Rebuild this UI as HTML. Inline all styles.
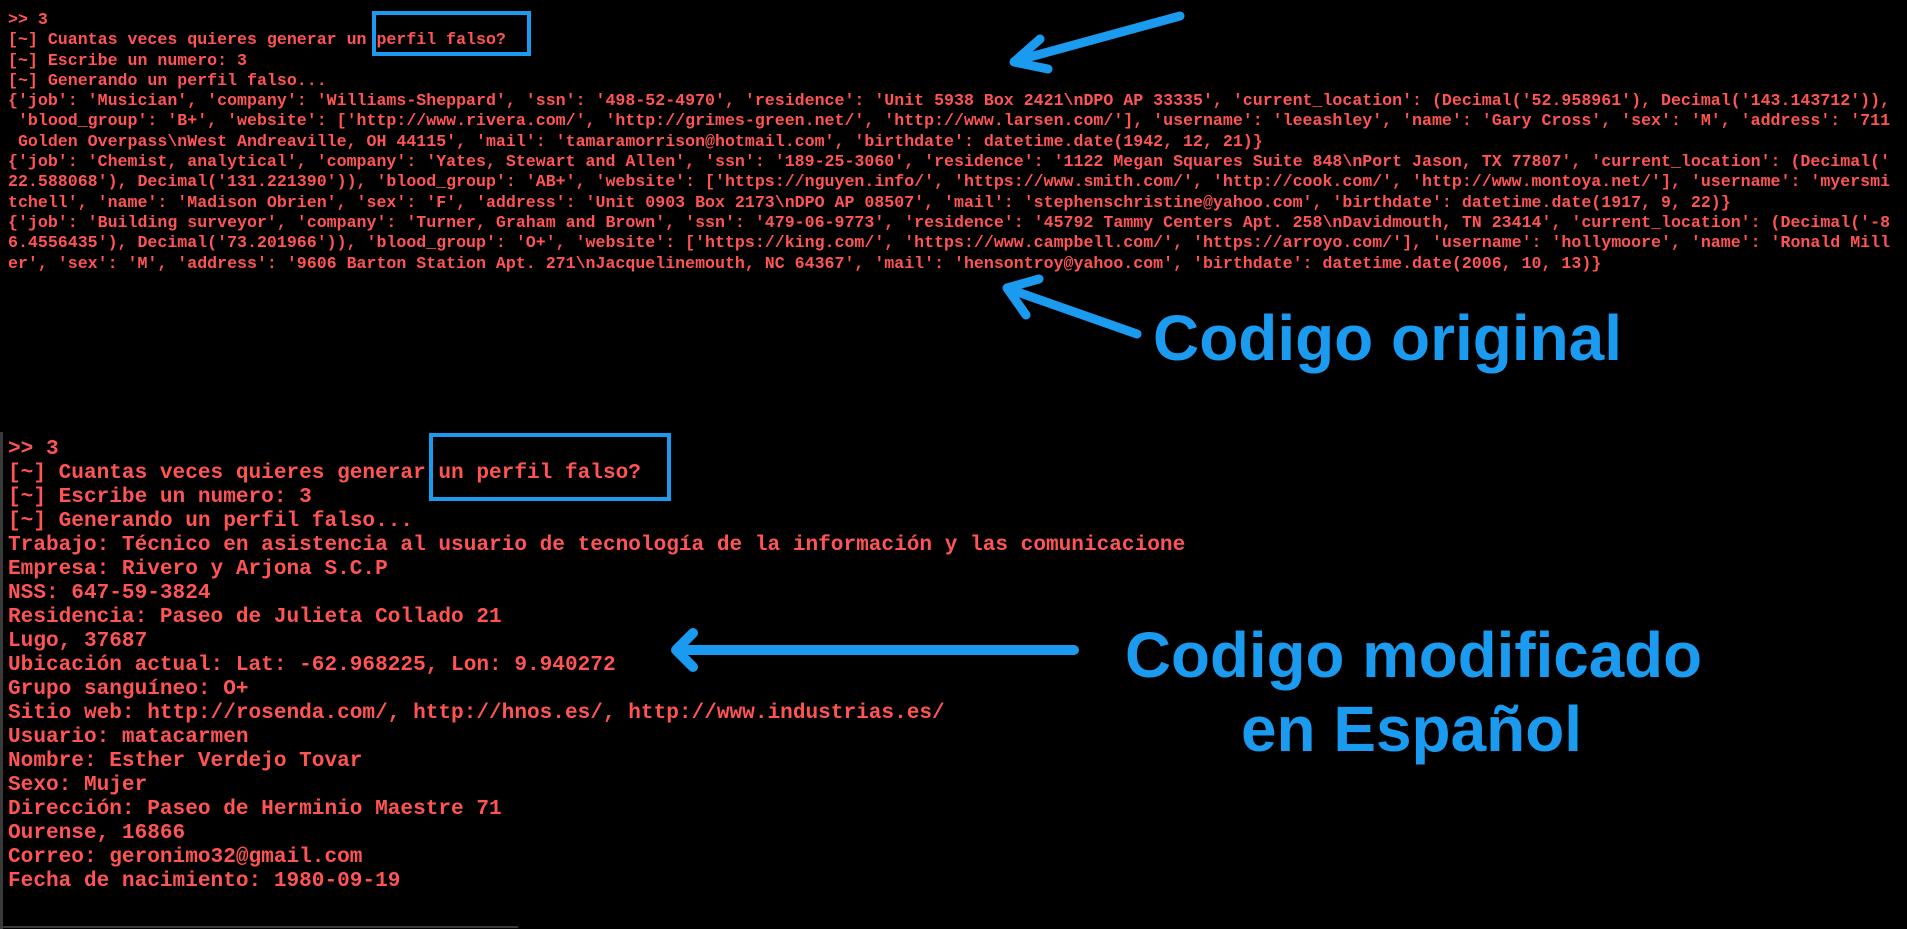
<!DOCTYPE html>
<html><head><meta charset="utf-8"><style>
html,body{margin:0;padding:0;background:#000;width:1907px;height:929px;overflow:hidden;position:relative}
.t{position:absolute;white-space:pre;color:#ff5454;font-family:"Liberation Mono",monospace}
#top{left:8px;top:10px;font-size:16.6px;line-height:20.3px;font-weight:bold}
#bot{left:8px;top:437px;font-size:21.1px;line-height:24px;font-weight:bold;width:1178px;overflow:hidden}
.box{position:absolute;border:4px solid #1a9bf0;box-sizing:border-box}
</style></head><body>
<div class="t" id="top">&gt;&gt; 3
[~] Cuantas veces quieres generar un perfil falso?
[~] Escribe un numero: 3
[~] Generando un perfil falso...
{'job': 'Musician', 'company': 'Williams-Sheppard', 'ssn': '498-52-4970', 'residence': 'Unit 5938 Box 2421\nDPO AP 33335', 'current_location': (Decimal('52.958961'), Decimal('143.143712')),
 'blood_group': 'B+', 'website': ['http://www.rivera.com/', 'http://grimes-green.net/', 'http://www.larsen.com/'], 'username': 'leeashley', 'name': 'Gary Cross', 'sex': 'M', 'address': '711
 Golden Overpass\nWest Andreaville, OH 44115', 'mail': 'tamaramorrison@hotmail.com', 'birthdate': datetime.date(1942, 12, 21)}
{'job': 'Chemist, analytical', 'company': 'Yates, Stewart and Allen', 'ssn': '189-25-3060', 'residence': '1122 Megan Squares Suite 848\nPort Jason, TX 77807', 'current_location': (Decimal('
22.588068'), Decimal('131.221390')), 'blood_group': 'AB+', 'website': ['https://nguyen.info/', 'https://www.smith.com/', 'http://cook.com/', 'http://www.montoya.net/'], 'username': 'myersmi
tchell', 'name': 'Madison Obrien', 'sex': 'F', 'address': 'Unit 0903 Box 2173\nDPO AP 08507', 'mail': 'stephenschristine@yahoo.com', 'birthdate': datetime.date(1917, 9, 22)}
{'job': 'Building surveyor', 'company': 'Turner, Graham and Brown', 'ssn': '479-06-9773', 'residence': '45792 Tammy Centers Apt. 258\nDavidmouth, TN 23414', 'current_location': (Decimal('-8
6.4556435'), Decimal('73.201966')), 'blood_group': 'O+', 'website': ['https://king.com/', 'https://www.campbell.com/', 'https://arroyo.com/'], 'username': 'hollymoore', 'name': 'Ronald Mill
er', 'sex': 'M', 'address': '9606 Barton Station Apt. 271\nJacquelinemouth, NC 64367', 'mail': 'hensontroy@yahoo.com', 'birthdate': datetime.date(2006, 10, 13)}</div>
<div class="box" style="left:372px;top:11px;width:159px;height:45px"></div>

<div style="position:absolute;left:0;top:432px;width:3px;height:497px;background:#3a3a3a"></div>
<div style="position:absolute;left:0;top:926px;width:518px;height:2px;background:#3a3a3a"></div>
<div class="t" id="bot">&gt;&gt; 3
[~] Cuantas veces quieres generar un perfil falso?
[~] Escribe un numero: 3
[~] Generando un perfil falso...
Trabajo: Técnico en asistencia al usuario de tecnología de la información y las comunicaciones
Empresa: Rivero y Arjona S.C.P
NSS: 647-59-3824
Residencia: Paseo de Julieta Collado 21
Lugo, 37687
Ubicación actual: Lat: -62.968225, Lon: 9.940272
Grupo sanguíneo: O+
Sitio web: http://rosenda.com/, http://hnos.es/, http://www.industrias.es/
Usuario: matacarmen
Nombre: Esther Verdejo Tovar
Sexo: Mujer
Dirección: Paseo de Herminio Maestre 71
Ourense, 16866
Correo: geronimo32@gmail.com
Fecha de nacimiento: 1980-09-19</div>
<div class="box" style="left:429px;top:433px;width:242px;height:68px"></div>

<svg style="position:absolute;left:0;top:0" width="1907" height="929" viewBox="0 0 1907 929">
<g stroke="#1a9bf0" stroke-width="9" stroke-linecap="round" stroke-linejoin="round" fill="none">
<path d="M1180 16 L1015 61 M1040 39 L1014 62 L1048 69"/>
<path d="M1137 334 L1009 289 M1026 315 L1007 288 L1039 279"/>
<path d="M1074 650 L677 650 M693 633 L676 650 L693 667" stroke-width="10"/>
</g>
<g fill="#1a9bf0" font-family="Liberation Sans, Arial, sans-serif" font-weight="bold" font-size="64">
<text x="1153" y="360" textLength="469" lengthAdjust="spacingAndGlyphs">Codigo original</text>
<text x="1125" y="677" textLength="577" lengthAdjust="spacingAndGlyphs">Codigo modificado</text>
<text x="1241" y="751" textLength="341" lengthAdjust="spacingAndGlyphs">en Español</text>
</g>
</svg>
</body></html>
